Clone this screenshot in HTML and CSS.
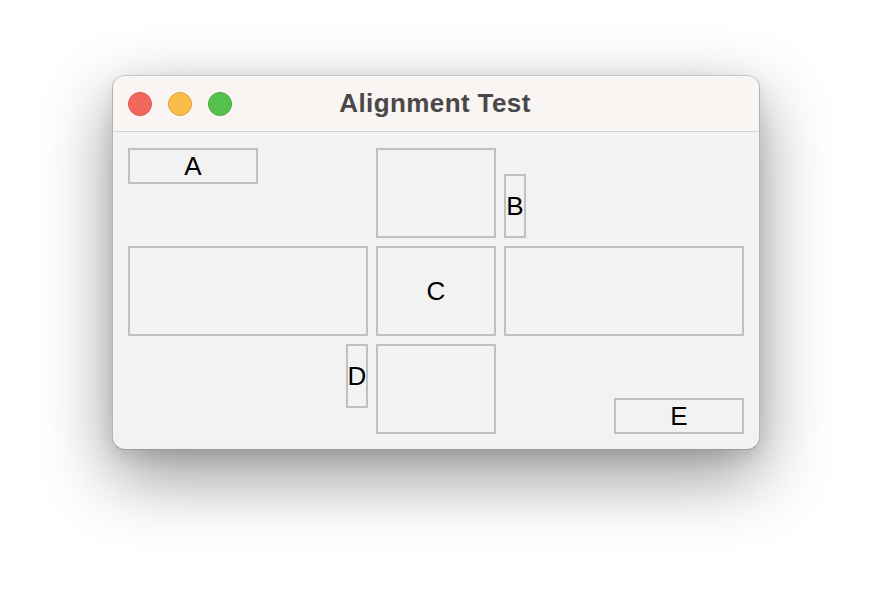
FILE: index.html
```html
<!DOCTYPE html>
<html>
<head>
<meta charset="utf-8">
<link rel="stylesheet" href="styles.css">
</head>
<body>
<div class="stage">
  <div class="window">
    <div class="titlebar">
      <div class="lights">
        <span class="light red"></span>
        <span class="light yellow"></span>
        <span class="light green"></span>
      </div>
      <div class="title">Alignment Test</div>
      <div></div>
    </div>
    <div class="content">
      <div class="box a">A</div>
      <div class="box fill"></div>
      <div class="box b">B</div>
      <div class="box fill"></div>
      <div class="box fill">C</div>
      <div class="box fill"></div>
      <div class="box d">D</div>
      <div class="box fill"></div>
      <div class="box e">E</div>
    </div>
  </div>
</div>
</body>
</html>
```
FILE: styles.css
```css
html, body {
  margin: 0;
  padding: 0;
  background: #ffffff;
}
.stage {
  box-sizing: border-box;
  width: 872px;
  height: 598px;
  padding: 75px 0 0 112px;
  overflow: hidden;
}
.window {
  box-sizing: border-box;
  width: 648px;
  height: 375px;
  border: 1px solid #b4b4b4;
  border-top-color: #c8c8c8;
  border-bottom-color: #9c9c9c;
  border-radius: 13px;
  overflow: hidden;
  background: #f2f2f2;
  box-shadow: 0 26px 70px rgba(0, 0, 0, 0.42), 0 6px 18px rgba(0, 0, 0, 0.1);
  font-family: "Liberation Sans", Arial, sans-serif;
}
.titlebar {
  height: 55px;
  border-bottom: 1px solid #d4d1cf;
  background: #f9f5f3;
  display: grid;
  grid-template-columns: 1fr auto 1fr;
  align-items: center;
  padding: 0 15px;
}
.lights {
  display: flex;
  gap: 16px;
}
.light {
  width: 24px;
  height: 24px;
  border-radius: 50%;
  box-sizing: border-box;
}
.red { background: #f1675c; border: 1px solid #e05247; }
.yellow { background: #f9bd4a; border: 1px solid #e0a33a; }
.green { background: #57c14f; border: 1px solid #45a93c; }
.title {
  font-weight: bold;
  font-size: 26px;
  letter-spacing: 0.4px;
  color: #4a4848;
  padding-right: 2px;
}
.content {
  padding: 16px 15px 15px 15px;
  display: grid;
  grid-template-columns: 240px 120px 240px;
  grid-template-rows: 90px 90px 90px;
  gap: 8px;
}
.box {
  box-sizing: border-box;
  border: 2px solid #c0c0c0;
  background: #f2f2f2;
  display: flex;
  align-items: center;
  justify-content: center;
  font-size: 26px;
  color: #000;
  overflow: hidden;
}
.fill {
  width: 100%;
  height: 100%;
}
.a {
  width: 130px;
  height: 36px;
  justify-self: start;
  align-self: start;
}
.b {
  width: 22px;
  height: 64px;
  justify-self: start;
  align-self: end;
}
.d {
  width: 22px;
  height: 64px;
  justify-self: end;
  align-self: start;
}
.e {
  width: 130px;
  height: 36px;
  justify-self: end;
  align-self: end;
}
```
